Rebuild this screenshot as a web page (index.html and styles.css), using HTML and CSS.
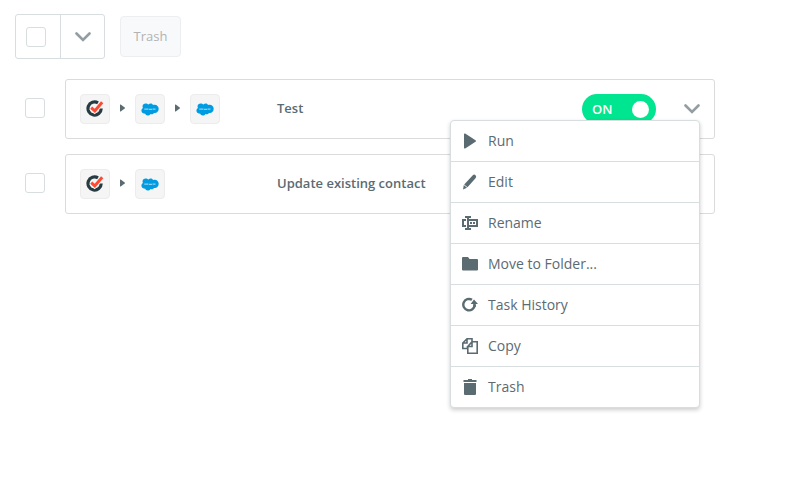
FILE: index.html
```html
<!DOCTYPE html>
<html lang="en">
<head>
<meta charset="utf-8">
<title>Tasks</title>
<link rel="stylesheet" href="styles.css">
</head>
<body>
<svg class="defs" aria-hidden="true">
  <symbol id="chevron" viewBox="0 0 16 10"><path d="M1.500 1.500 8 8l6.500-6.500" fill="none" stroke="#929ea2" stroke-width="2.600" stroke-linecap="round"/></symbol>
  <symbol id="arrow" viewBox="0 0 5 8"><path d="M.7.600 4.700 3.500q.5.500 0 1L.7 7.400Q0 7.800 0 7V1Q0 .2.7.600z" fill="#5b6b72"/></symbol>
  <symbol id="check-app" viewBox="0 0 18 18">
    <path d="M12 2.800A6.600 6.600 0 1 0 15.200 8.500" fill="none" stroke="#263c42" stroke-width="3.200"/>
    <path d="M5 7.800 8.600 11.200l7.600-8.600" fill="none" stroke="#f5f5f5" stroke-width="4.400"/>
    <path d="M5.200 7.700 8.800 10.900l7.400-8.700" fill="none" stroke="#ff4a33" stroke-width="3"/>
  </symbol>
  <symbol id="cloud" viewBox="0 0 18 13">
    <path d="M7.400 1.600C8.700.2 11 .2 12 2c2.900-1.200 5.700.8 5.700 3.800 0 2.800-2.200 4.600-4.700 4.100-.8 1.300-2.300 1.600-3.500 1-1.200 2.200-4.700 2.100-5.500-.3C2 10.900.4 9.400.4 7.600c0-1.200.6-2.100 1.500-2.700C.7 2 2.700.5 4.600.5c1.200 0 2.200.4 2.800 1.100z" fill="#009ce2"/>
    <path d="M3.300 6.200h4.200M8 6.400h3M11.500 6.200h3" stroke="#8fd0f0" stroke-width="1.200"/>
  </symbol>
</svg>

<main class="page">
  <div class="toolbar">
    <div class="selector">
      <label class="selector-check"><input class="check" type="checkbox" aria-label="Select all"></label>
      <button class="selector-more" type="button" aria-label="Selection options"><svg class="chevron"><use href="#chevron"/></svg></button>
    </div>
    <button class="trash" type="button" disabled>Trash</button>
  </div>

  <div class="task">
    <input class="check" type="checkbox" aria-label="Select Test">
    <article class="card">
      <div class="apps">
        <span class="app"><svg class="logo-check"><use href="#check-app"/></svg></span>
        <svg class="arrow"><use href="#arrow"/></svg>
        <span class="app"><svg class="logo-cloud"><use href="#cloud"/></svg></span>
        <svg class="arrow"><use href="#arrow"/></svg>
        <span class="app"><svg class="logo-cloud"><use href="#cloud"/></svg></span>
      </div>
      <h2 class="name">Test</h2>
      <button class="switch" type="button" role="switch" aria-checked="true">ON<span class="knob"></span></button>
      <button class="more" type="button" aria-label="Task options" aria-expanded="true"><svg class="chevron"><use href="#chevron"/></svg></button>
      <div class="menu" role="menu">
        <button class="item" type="button" role="menuitem">
          <svg class="icon" viewBox="0 0 16 16"><path d="M3.200.6 13.500 7.200q1.200.8 0 1.600L3.200 15.400q-1.200.6-1.200-.6V1.200Q2 0 3.200.6z"/></svg>Run</button>
        <button class="item" type="button" role="menuitem">
          <svg class="icon" viewBox="0 0 16 16"><path d="M10.800 1.200q1.400-1.200 2.700 0t.2 2.700L5.500 13.200 2.200 10.400zM1.800 11l3.200 2.800L1 15.600z"/></svg>Edit</button>
        <button class="item" type="button" role="menuitem">
          <svg class="icon" viewBox="0 0 16 16"><path d="M3 1h6v2H7v1h9v8H7v1h2v2H3v-2h2V3H3zM7 6v4h7V6zM8 7h2v2H8zm3 0h2v2h-2zM0 4h4v2H2v4h2v2H0z" fill-rule="evenodd"/></svg>Rename</button>
        <button class="item" type="button" role="menuitem">
          <svg class="icon" viewBox="0 0 16 16"><path d="M0 2q0-1 1-1h5l1.500 2H15q1 0 1 1v9.500q0 1-1 1H1q-1 0-1-1z"/></svg>Move to Folder...</button>
        <button class="item" type="button" role="menuitem">
          <svg class="icon" viewBox="0 0 16 16"><path d="M10 2.800A5.700 5.700 0 1 0 12.700 8" fill="none" stroke="#5b6b72" stroke-width="2.400"/><path d="M12 2.500 16 7h-2.200v3h-2.600V7H8.600z"/></svg>Task History</button>
        <button class="item" type="button" role="menuitem">
          <svg class="icon" viewBox="0 0 16 16"><path d="M5 10.500H.8V5L5 .8h5V4M5 .8V5H.8M5.800 8.500v6.700h9.400V3.800H10L5.800 8.500H10V3.800" fill="none" stroke="#5b6b72" stroke-width="1.600"/></svg>Copy</button>
        <button class="item" type="button" role="menuitem">
          <svg class="icon" viewBox="0 0 16 16"><path d="M1.500 1H6V0h4v1h4.500v2h-13zM2 4h12v11q0 1-1 1H3q-1 0-1-1z"/></svg>Trash</button>
      </div>
    </article>
  </div>

  <div class="task">
    <input class="check" type="checkbox" aria-label="Select Update existing contact">
    <article class="card">
      <div class="apps">
        <span class="app"><svg class="logo-check"><use href="#check-app"/></svg></span>
        <svg class="arrow"><use href="#arrow"/></svg>
        <span class="app"><svg class="logo-cloud"><use href="#cloud"/></svg></span>
      </div>
      <h2 class="name">Update existing contact</h2>
    </article>
  </div>
</main>
</body>
</html>
```
FILE: styles.css
```css
* { box-sizing: border-box; }

body {
  margin: 0;
  background: #fff;
  color: #5b6b72;
  font: 14px/20px "Open Sans", sans-serif;
}

button {
  margin: 0;
  padding: 0;
  border: 0;
  background: none;
  color: inherit;
  font: inherit;
}

svg { display: block; flex: none; }

.defs { position: absolute; width: 0; height: 0; }

.page {
  min-height: 100vh;
  padding: 14px 74px 0 15px;
}

.toolbar {
  display: flex;
  align-items: center;
  gap: 15px;
  margin-bottom: 20px;
}

.selector {
  display: grid;
  grid-template-columns: 44px 44px;
  width: 90px;
  height: 45px;
  border: 1px solid #d8dde0;
  border-radius: 3px;
}

.selector-check,
.selector-more {
  display: flex;
  align-items: center;
  justify-content: center;
}

.selector-check { padding-right: 4px; }
.selector-more { border-left: 1px solid #d8dde0; }

.check {
  appearance: none;
  flex: none;
  width: 20px;
  height: 20px;
  margin: 0;
  border: 1px solid #d8dde0;
  border-radius: 3px;
  background: #fff;
}

.chevron { width: 16px; height: 10px; }

.trash {
  padding: 10px 12px;
  min-width: 61px;
  border: 1px solid #eceef0;
  border-radius: 4px;
  background: #f8f9fb;
  color: #b3b3b3;
  font-size: 13px;
  line-height: 19px;
}

.task {
  display: flex;
  align-items: center;
  gap: 20px;
  margin-bottom: 15px;
  padding-left: 10px;
}

.task > .check { margin-bottom: 2px; }

.card {
  position: relative;
  display: flex;
  flex: 1;
  align-items: center;
  height: 60px;
  padding: 0 14px;
  border: 1px solid #d9dbdd;
  border-radius: 3px;
}

.apps {
  display: flex;
  align-items: center;
  gap: 10px;
  width: 197px;
}

.app {
  display: flex;
  align-items: center;
  justify-content: center;
  width: 30px;
  height: 30px;
  border: 1px solid #ececec;
  border-radius: 4px;
  background: #f5f5f5;
}

.logo-check { width: 18px; height: 18px; }
.logo-cloud { width: 18px; height: 13px; }
.arrow { width: 5px; height: 8px; margin-bottom: 2px; }

.name {
  flex: 1;
  margin: 0 0 2px;
  font-size: 13px;
  font-weight: 600;
}

.switch {
  display: flex;
  align-items: center;
  justify-content: space-between;
  width: 74px;
  height: 30px;
  margin-right: 28px;
  padding: 0 7px 0 10px;
  border-radius: 15px;
  background: #00e58f;
  color: #fff;
  font-size: 13px;
  font-weight: 600;
}

.knob {
  width: 17px;
  height: 17px;
  border-radius: 50%;
  background: #fff;
}

.menu {
  position: absolute;
  z-index: 1;
  top: 40px;
  right: 14px;
  width: 250px;
  border: 1px solid #d8dde0;
  border-radius: 4px;
  background: #fff;
  box-shadow: 0 2px 4px rgba(0, 0, 0, 0.2);
}

.item {
  display: flex;
  align-items: center;
  gap: 10px;
  width: 100%;
  height: 40px;
  padding: 0 11px;
}

.item + .item {
  height: 41px;
  border-top: 1px solid #d8dde0;
}

.icon { width: 16px; height: 16px; fill: #5b6b72; }
```
